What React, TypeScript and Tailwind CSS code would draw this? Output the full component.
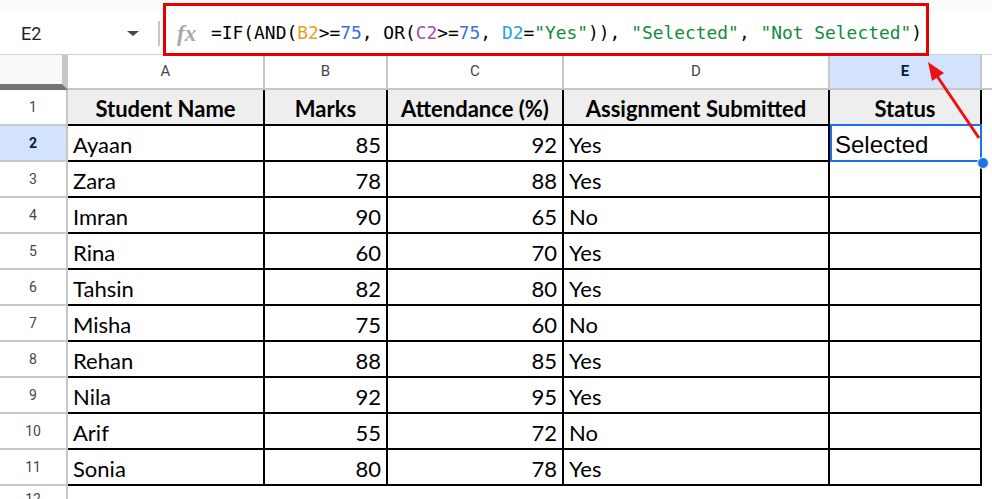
import React from 'react';

const ROWS: [string, number, number, string][] = [
  ['Ayaan', 85, 92, 'Yes'],
  ['Zara', 78, 88, 'Yes'],
  ['Imran', 90, 65, 'No'],
  ['Rina', 60, 70, 'Yes'],
  ['Tahsin', 82, 80, 'Yes'],
  ['Misha', 75, 60, 'No'],
  ['Rehan', 88, 85, 'Yes'],
  ['Nila', 92, 95, 'Yes'],
  ['Arif', 55, 72, 'No'],
  ['Sonia', 80, 78, 'Yes'],
];

const COLS = [
  { key: 'A', w: 'w-[197px]' },
  { key: 'B', w: 'w-[123px]' },
  { key: 'C', w: 'w-[176px]' },
  { key: 'D', w: 'w-[266px]' },
  { key: 'E', w: 'w-[152px]' },
];

const cell = "shrink-0 h-full border-r-2 border-b-2 border-black flex items-center px-[5px] pt-[3px] font-['Lato'] text-[22px] text-black";
const rowNum = "w-[68px] shrink-0 h-full border-r-2 border-b-2 border-[#c7c7c7] flex items-center justify-center font-['Roboto'] text-[14px]";

const Formula = () => (
  <div className="font-['DejaVu_Sans_Mono'] text-[17.9px] text-black whitespace-pre">
    =IF(AND(<span className="text-[#f09a1f]">B2</span>&gt;=<span className="text-[#3d6fd9]">75</span>, OR(
    <span className="text-[#a24bb0]">C2</span>&gt;=<span className="text-[#3d6fd9]">75</span>,{' '}
    <span className="text-[#24a3d8]">D2</span>=<span className="text-[#128a3a]">"Yes"</span>)),{' '}
    <span className="text-[#128a3a]">"Selected"</span>, <span className="text-[#128a3a]">"Not Selected"</span>)
  </div>
);

export default function App() {
  return (
    <div className="relative w-[992px] h-[499px] overflow-hidden bg-white font-['Roboto']">
      <div className="h-[12px] bg-[#f9fbfd]" />

      {/* formula bar */}
      <div className="h-[42px] flex items-center">
        <div className="w-[158px] flex items-center justify-between pl-[21px] pr-[19px]">
          <span className="text-[18px] text-[#1f1f1f]">E2</span>
          <span className="w-0 h-0 border-l-[6px] border-r-[6px] border-t-[5px] border-l-transparent border-r-transparent border-t-[#444746]" />
        </div>
        <div className="w-[2px] h-[25px] bg-[#c7c7c7]" />
        <span className="ml-[17px] w-[34px] font-['Liberation_Serif'] italic font-bold text-[23px] text-[#a8a8a8] leading-none">fx</span>
        <Formula />
      </div>

      {/* column letters */}
      <div className="flex h-[36px] border-t border-[#d0d0d0]">
        <div className="w-[68px] shrink-0 h-full bg-[#f8f9fa] border-r-[6px] border-b-[6px] border-r-[#c7c7c7] border-b-[#757575]" />
        {COLS.map((c) => (
          <div
            key={c.key}
            className={`${c.w} shrink-0 h-full border-r-2 border-b-2 border-[#c7c7c7] flex items-center justify-center text-[15px] ${
              c.key === 'E' ? 'bg-[#d3e3fd] font-bold text-[#041e49]' : 'text-[#444746]'
            }`}
          >
            {c.key}
          </div>
        ))}
        <div className="flex-1 h-full border-b-2 border-[#c7c7c7]" />
      </div>

      {/* header row */}
      <div className="flex h-[36px]">
        <div className={`${rowNum} text-[#444746]`}>1</div>
        {['Student Name', 'Marks', 'Attendance (%)', 'Assignment Submitted', 'Status'].map((h, i) => (
          <div key={h} className={`${cell} ${COLS[i].w} justify-center bg-[#eeeeee] font-bold pt-0`}>
            {h}
          </div>
        ))}
        <div className="flex-1" />
      </div>

      {ROWS.map(([name, marks, att, sub], i) => (
        <div key={name} className="flex h-[36px]">
          <div className={`${rowNum} ${i === 0 ? 'bg-[#d3e3fd] font-bold text-[#041e49]' : 'text-[#444746]'}`}>
            {i + 2}
          </div>
          <div className={`${cell} w-[197px]`}>{name}</div>
          <div className={`${cell} w-[123px] justify-end`}>{marks}</div>
          <div className={`${cell} w-[176px] justify-end`}>{att}</div>
          <div className={`${cell} w-[266px]`}>{sub}</div>
          <div className={`${cell} w-[152px] font-['Liberation_Sans'] text-[24px]`}>{i === 0 ? 'Selected' : ''}</div>
          <div className="flex-1" />
        </div>
      ))}

      <div className="flex h-[26px]">
        <div className="w-[68px] shrink-0 h-full border-r-2 border-[#c7c7c7] flex items-center justify-center text-[14px] text-[#444746]">12</div>
      </div>

      {/* annotations */}
      <div className="absolute left-[163px] top-[3px] w-[766px] h-[53px] border-[3px] border-[#e60000]" />
      <div className="absolute left-[830px] top-[124px] w-[152px] h-[38px] border-2 border-[#1a73e8]" />
      <div className="absolute left-[977px] top-[157px] w-[12px] h-[12px] rounded-full bg-[#1a73e8] border border-white" />
      <svg className="absolute left-0 top-0" width="992" height="499">
        <line x1="979" y1="138" x2="937" y2="76" stroke="#ee1111" strokeWidth="3" />
        <polygon points="928,62 944,73 932,81" fill="#ee1111" />
      </svg>
    </div>
  );
}
